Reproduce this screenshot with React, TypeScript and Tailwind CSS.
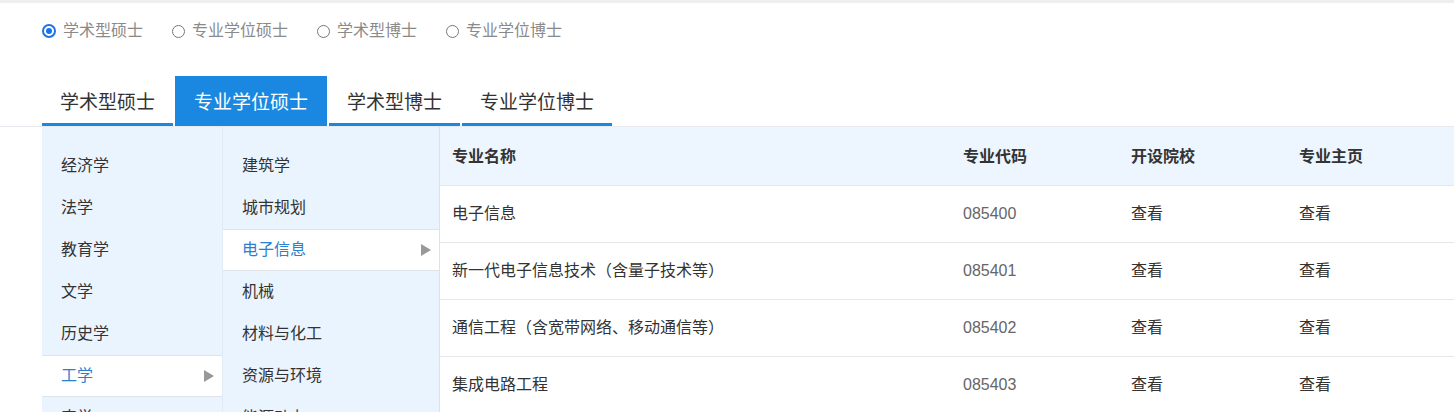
import React from 'react';

const font = "font-['Liberation_Sans','Noto_Sans_CJK_SC',sans-serif]";

const radios = ['学术型硕士', '专业学位硕士', '学术型博士', '专业学位博士'];
const tabs = ['学术型硕士', '专业学位硕士', '学术型博士', '专业学位博士'];
const categories = ['经济学', '法学', '教育学', '文学', '历史学', '工学', '农学'];
const subjects = ['建筑学', '城市规划', '电子信息', '机械', '材料与化工', '资源与环境', '能源动力'];

const rows = [
  { name: '电子信息', code: '085400' },
  { name: '新一代电子信息技术（含量子技术等）', code: '085401' },
  { name: '通信工程（含宽带网络、移动通信等）', code: '085402' },
  { name: '集成电路工程', code: '085403' },
];

const Arrow = () => (
  <svg width="12" height="14" viewBox="0 0 12 14">
    <path d="M1 1 L11 7 L1 13 Z" fill="#999999" />
  </svg>
);

const ListItem = ({ label, active }: { label: string; active: boolean }) => (
  <div
    className={
      active
        ? 'h-[42px] flex items-center justify-between pl-[19px] pr-[7px] bg-white border-y border-[#dfe4ea] text-[#2b7fd0]'
        : 'h-[42px] flex items-center pl-[19px] pr-[7px] border-y border-transparent text-[#333]'
    }
  >
    <span className="text-[16px] leading-none">{label}</span>
    {active && <Arrow />}
  </div>
);

const App: React.FC = () => {
  return (
    <div className={`w-[1454px] h-[412px] overflow-hidden bg-white ${font}`}>
      <div className="h-[3px] bg-[#eeeeee]" />

      {/* Radio row */}
      <div className="flex items-center gap-[29px] pl-[42px] h-[54px] pt-[2px]">
        {radios.map((r, i) => (
          <label key={r} className="flex items-center gap-[7px] text-[16px] text-[#8a8a8a] leading-none">
            {i === 0 ? (
              <span className="w-[14px] h-[14px] rounded-full border-[2px] border-[#1a73e8] flex items-center justify-center">
                <span className="w-[6px] h-[6px] rounded-full bg-[#1a73e8]" />
              </span>
            ) : (
              <span className="w-[13px] h-[13px] rounded-full border border-[#777]" />
            )}
            {r}
          </label>
        ))}
      </div>

      {/* Tabs */}
      <div className="flex mt-[19px] pl-[42px] border-b border-[#e6e9ed] h-[51px]">
        {tabs.map((t, i) => (
          <div
            key={t}
            className={
              i === 1
                ? 'h-[50px] px-[19px] pt-[4px] flex items-center bg-[#1a88e0] text-white text-[19px] mr-[2px]'
                : 'h-[50px] px-[18px] pt-[7px] flex items-center border-b-[3px] border-[#1a88e0] text-[#333] text-[19px] mr-[2px]'
            }
          >
            {t}
          </div>
        ))}
      </div>

      {/* Body */}
      <div className="flex ml-[42px]">
        <div className="w-[181px] shrink-0 bg-[#eaf4fe] pt-[18px] border-r border-[#e2eaf3]">
          {categories.map((c) => (
            <ListItem key={c} label={c} active={c === '工学'} />
          ))}
        </div>
        <div className="w-[217px] shrink-0 bg-[#eaf4fe] pt-[18px] border-r border-[#dde2e8]">
          {subjects.map((s) => (
            <ListItem key={s} label={s} active={s === '电子信息'} />
          ))}
        </div>
        <div className="flex-1">
          <table className="w-full border-collapse text-[16px]">
            <thead>
              <tr className="h-[58px] bg-[#edf5fe] text-left text-[#333]">
                <th className="pl-[12px] pt-[2px] w-[511px] font-bold">专业名称</th>
                <th className="pl-[12px] pt-[2px] w-[168px] font-bold">专业代码</th>
                <th className="pl-[12px] pt-[2px] w-[168px] font-bold">开设院校</th>
                <th className="pl-[12px] pt-[2px] font-bold">专业主页</th>
              </tr>
            </thead>
            <tbody>
              {rows.map((r) => (
                <tr key={r.code} className="h-[57px] border-t border-[#e5e7ea] text-[#333]">
                  <td className="pl-[12px]">{r.name}</td>
                  <td className="pl-[12px] text-[#666]">{r.code}</td>
                  <td className="pl-[12px]">查看</td>
                  <td className="pl-[12px]">查看</td>
                </tr>
              ))}
            </tbody>
          </table>
        </div>
      </div>
    </div>
  );
};

export default App;
